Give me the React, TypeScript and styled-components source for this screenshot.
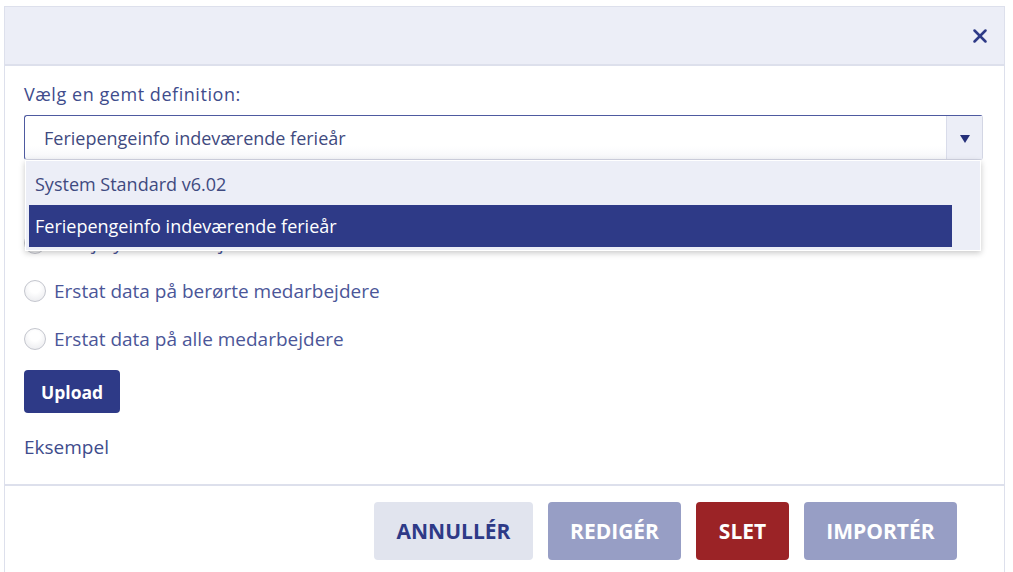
//Modules
import styled, { createGlobalStyle } from "styled-components";
import { X } from "lucide-react";

//Global
const GlobalStyle = createGlobalStyle`
  html, body{
    margin:0;
    padding:0;
    background:#fff;
    font-family:"Open Sans", "Noto Sans", sans-serif;
  }
`;

//Page
const Page = styled.div`
  padding:6px 8px 0 4px;
  height:572px;
  box-sizing:border-box;
  overflow:hidden;
`;

const Dialog = styled.section`
  border:1px solid #dde0ec;
  border-bottom:none;
  background:#fff;
  height:100%;
  box-sizing:border-box;
`;

const Header = styled.header`
  height:57px;
  display:flex;
  align-items:center;
  justify-content:flex-end;
  padding-right:13px;
  background:#eceef7;
  border-bottom:2px solid #dde0ec;
`;

const CloseButton = styled.button`
  border:none;
  background:none;
  padding:0;
  display:flex;
  color:#2e3a87;
  cursor:pointer;
`;

const Body = styled.div`
  padding:0 21px 0 19px;
  display:flex;
  flex-direction:column;
  align-items:flex-start;
`;

const Label = styled.label`
  margin-top:18px;
  font-size:18px;
  letter-spacing:.55px;
  line-height:20px;
  color:#404c8c;
`;

//Select
const SelectWrap = styled.div`
  position:relative;
  align-self:stretch;
  margin-top:11px;
`;

const SelectBox = styled.div`
  height:45px;
  box-sizing:border-box;
  display:flex;
  align-items:stretch;
  border:1px solid #d3d6e4;
  border-top-color:#4e5aa0;
  border-left-color:#4e5aa0;
  border-radius:3px;
  background:linear-gradient(#fff 70%, #f6f7fa);
`;

const SelectValue = styled.div`
  flex:1;
  display:flex;
  align-items:center;
  padding-left:19px;
  font-size:18px;
  color:#3f4a80;
`;

const Caret = styled.div`
  width:35px;
  display:flex;
  align-items:center;
  justify-content:center;
  background:#eceef7;
  border-left:1px solid #d9dcea;
  &::after{
    content:"";
    border-left:5px solid transparent;
    border-right:5px solid transparent;
    border-top:8px solid #25307a;
    margin-top:2px;
  }
`;

const Options = styled.ul`
  position:absolute;
  top:100%;
  left:1px;
  right:2px;
  margin:0;
  padding:2px 28px 3px 3px;
  list-style:none;
  background:#eceef7;
  border:1px solid #fff;
  box-shadow:0 2px 6px rgba(0,0,0,.22);
  z-index:2;
`;

const Option = styled.li<{ $active?: boolean }>`
  height:42px;
  display:flex;
  align-items:center;
  font-size:18px;
  color:${p => p.$active ? "#fff" : "#3f4a80"};
  background:${p => p.$active ? "#2e3a87" : "transparent"};
  margin-left:${p => p.$active ? "0" : "-3px"};
  padding-left:${p => p.$active ? "6px" : "9px"};
`;

//Radios
const RadioList = styled.div`
  margin-top:71px;
  display:flex;
  flex-direction:column;
  gap:24px;
`;

const RadioRow = styled.label`
  display:flex;
  align-items:center;
  gap:8px;
  height:24px;
  font-size:19px;
  color:#4b5698;
`;

const RadioCircle = styled.span`
  width:22px;
  height:22px;
  border-radius:50%;
  border:1px solid #c4c6ce;
  background:radial-gradient(circle at 50% 35%, #fff 30%, #e6e7eb);
  box-sizing:border-box;
`;

const UploadButton = styled.button`
  margin-top:19px;
  height:43px;
  padding:0 17px;
  border:none;
  border-radius:4px;
  background:#2e3a87;
  color:#fff;
  font-family:inherit;
  font-weight:700;
  font-size:17.5px;
`;

const Link = styled.a`
  margin-top:24px;
  font-size:19px;
  line-height:20px;
  color:#404c8c;
  text-decoration:none;
`;

//Footer
const Footer = styled.footer`
  margin-top:27px;
  border-top:2px solid #dde0ec;
  padding:16px 47px 0 0;
  display:flex;
  justify-content:flex-end;
  gap:15px;
`;

const tones = {
  light: { bg: "#e1e4ee", fg: "#2e3a87" },
  muted: { bg: "#979ec5", fg: "#fff" },
  danger: { bg: "#9b2326", fg: "#fff" },
};

const FooterButton = styled.button<{ $tone: keyof typeof tones; $w: number }>`
  width:${p => p.$w}px;
  height:58px;
  padding:0;
  border:none;
  border-radius:4px;
  font-family:inherit;
  font-weight:700;
  font-size:21px;
  background:${p => tones[p.$tone].bg};
  color:${p => tones[p.$tone].fg};
`;

const App = () => {
  return(
    <>
    <GlobalStyle />
    <Page>
      <Dialog>
        <Header>
          <CloseButton aria-label="Luk"><X size={22} strokeWidth={2.8} /></CloseButton>
        </Header>
        <Body>
          <Label>Vælg en gemt definition:</Label>
          <SelectWrap>
            <SelectBox>
              <SelectValue>Feriepengeinfo indeværende ferieår</SelectValue>
              <Caret />
            </SelectBox>
            <Options>
              <Option>System Standard v6.02</Option>
              <Option $active>Feriepengeinfo indeværende ferieår</Option>
            </Options>
          </SelectWrap>
          <RadioList>
            <RadioRow><RadioCircle />Tilføj nye medarbejdere</RadioRow>
            <RadioRow><RadioCircle />Erstat data på berørte medarbejdere</RadioRow>
            <RadioRow><RadioCircle />Erstat data på alle medarbejdere</RadioRow>
          </RadioList>
          <UploadButton>Upload</UploadButton>
          <Link href="#">Eksempel</Link>
        </Body>
        <Footer>
          <FooterButton $tone="light" $w={159}>ANNULLÉR</FooterButton>
          <FooterButton $tone="muted" $w={133}>REDIGÉR</FooterButton>
          <FooterButton $tone="danger" $w={93}>SLET</FooterButton>
          <FooterButton $tone="muted" $w={153}>IMPORTÉR</FooterButton>
        </Footer>
      </Dialog>
    </Page>
    </>
  )
};

export default App;
